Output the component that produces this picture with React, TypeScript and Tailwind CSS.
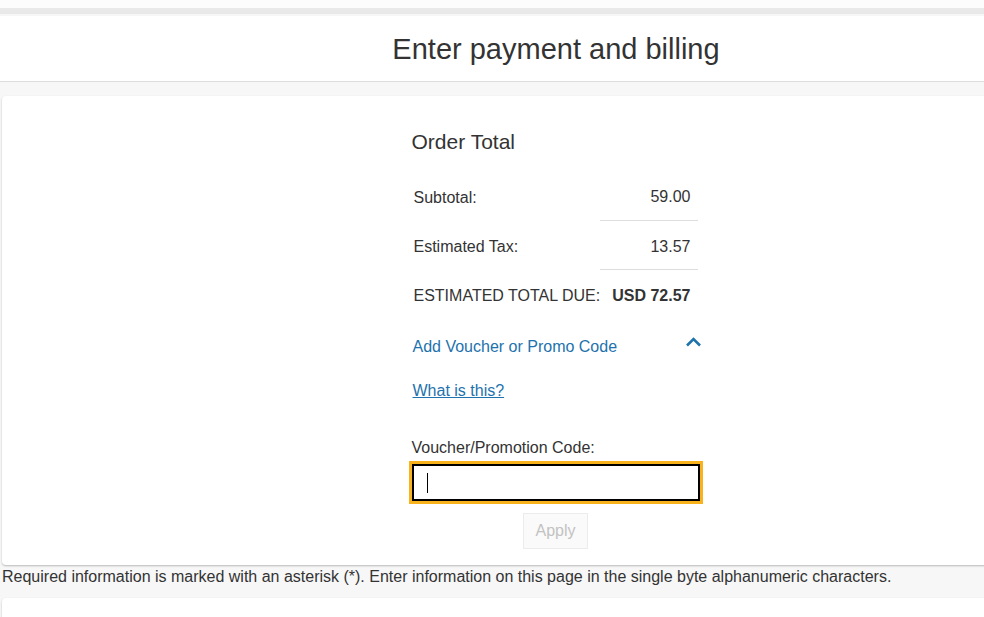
const rows = [
  { label: "Subtotal:", value: "59.00" },
  { label: "Estimated Tax:", value: "13.57" },
]

export default function App() {
  return (
    <div className="w-full h-[617px] overflow-hidden bg-[#f7f7f7] text-[#333] font-['Liberation_Sans',sans-serif]">
      <div className="w-[1112px]">
        <div className="h-2 bg-[#fcfcfc]" />
        <div className="h-[6px] bg-[#e9e9e9]" />
        <div className="h-[2px] bg-[#f6f6f6]" />
        <header className="h-[66px] bg-white border-b border-[#dddddd] flex items-center justify-center">
          <h1 className="text-[29px] leading-none pt-[2px]">Enter payment and billing</h1>
        </header>

        <div className="pt-[14px] pl-[2px]">
          <div className="bg-white rounded-[4px] shadow-[0_1px_2px_rgba(0,0,0,0.25)] h-[469px] flex justify-center">
            <div className="w-[294px] pt-[34px] -ml-[3px]">
              <h2 className="text-[21px] leading-6 pl-[3px]">Order Total</h2>

              <table className="w-[289px] mt-[17px] text-[16px] border-collapse">
                <tbody>
                  {rows.map((r) => (
                    <tr key={r.label} className="h-[49px]">
                      <td className="pl-[5px] pt-[4px] align-middle">{r.label}</td>
                      <td className="w-[100px] text-right pr-[7px] pt-[4px] border-b border-[#dddddd] align-middle">{r.value}</td>
                    </tr>
                  ))}
                  <tr className="h-[50px]">
                    <td className="pl-[5px] pt-[4px] whitespace-nowrap">ESTIMATED TOTAL DUE:</td>
                    <td className="text-right pr-[7px] pt-[4px] font-bold">USD 72.57</td>
                  </tr>
                </tbody>
              </table>

              <div className="flex items-center justify-between mt-[16px] pl-[4px] pr-[1px]">
                <span className="text-[16px] text-[#1e72ad]">Add Voucher or Promo Code</span>
                <svg width="17" height="10" viewBox="0 0 17 10" className="-mt-[11px]">
                  <polyline points="2,8.5 8.5,2 15,8.5" fill="none" stroke="#1e72ad" strokeWidth="2.6" />
                </svg>
              </div>

              <a className="block mt-[20px] pl-[4px] text-[16px] text-[#1e72ad] underline">What is this?</a>

              <label className="block mt-[33px] pl-[3px] text-[16px]">Voucher/Promotion Code:</label>
              <div className="mt-[1px] h-[43px] border-[3px] border-[#f7b21c]">
                <div className="h-full border-2 border-black flex items-center pl-[13px]">
                  <div className="w-px h-[20px] bg-black" />
                </div>
              </div>

              <div className="flex justify-center mt-[9px]">
                <button className="w-[65px] h-[36px] border border-[#ececec] bg-[#fafafa] text-[#c2c2c2] text-[16px]">
                  Apply
                </button>
              </div>
            </div>
          </div>
        </div>

        <p className="text-[16px] leading-5 pl-[2px] mt-[2px]">
          Required information is marked with an asterisk (*). Enter information on this page in the single byte alphanumeric characters.
        </p>

        <div className="mt-[11px] ml-[2px] bg-white rounded-[4px] shadow-[0_1px_2px_rgba(0,0,0,0.25)] h-[100px]" />
      </div>
    </div>
  )
}
